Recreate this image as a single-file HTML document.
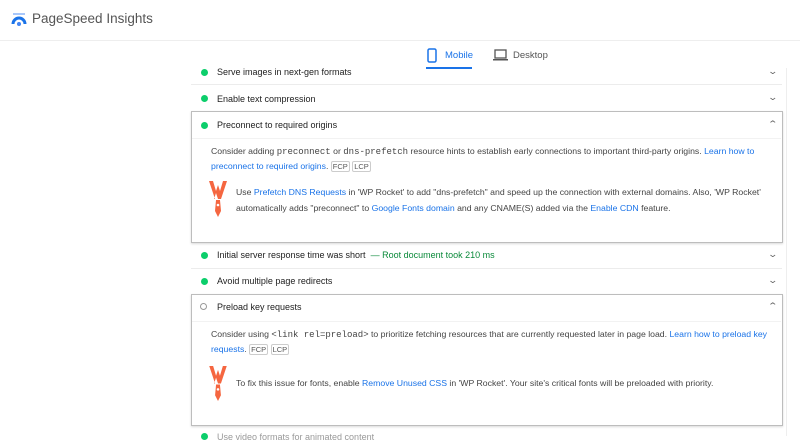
<!DOCTYPE html><html><head><style>
body{margin:0;width:800px;height:436px;overflow:hidden;background:#fff;font-family:"Liberation Sans",sans-serif;color:#212121;position:relative}
.a{position:absolute}
.hdr{left:0;top:0;width:800px;height:40px;border-bottom:1px solid #eee}
.t{font-size:9px;white-space:nowrap}
.dot{width:7px;height:7px;border-radius:50%;background:#0cce6b}
.chev{font-size:9px;color:#666;transform:scaleX(1.4)}
.ln{height:1px;background:#ececec}
.box{border:1px solid #bdbdbd;box-shadow:0 1px 2px rgba(0,0,0,.15)}
a{color:#1a73e8;text-decoration:none}
.m{font-family:"Liberation Mono",monospace;font-size:9px}
.tag{border:1px solid #ccc;border-radius:2px;font-size:7.5px;padding:0 1px;color:#555}
.p{font-size:8.7px;color:#444;white-space:nowrap}
</style></head><body>
<div class="a hdr"></div>
<svg class="a" style="left:11px;top:12px" width="16" height="14" viewBox="0 0 16 14"><path d="M2 12a6 6 0 0 1 12 0" stroke="#1a73e8" stroke-width="3" fill="none"/><circle cx="8" cy="12" r="2" fill="#4285f4"/><rect x="2" y="1" width="12" height="2" fill="#a8c7fa"/></svg>
<div class="a" style="left:32px;top:11px;font-size:13.5px;color:#555">PageSpeed Insights</div>
<svg class="a" style="left:427px;top:48px" width="10" height="15"><rect x="1" y="1" width="8" height="13" rx="1.5" fill="none" stroke="#1a73e8" stroke-width="1.5"/></svg>
<div class="a" style="left:445px;top:50px;font-size:9.5px;color:#1a73e8">Mobile</div>
<div class="a" style="left:426px;top:67px;width:46px;height:2px;background:#1a73e8"></div>
<svg class="a" style="left:493px;top:49px" width="15" height="12"><rect x="2" y="1" width="11" height="8" fill="none" stroke="#555" stroke-width="1.3"/><rect x="0" y="10" width="15" height="1.5" fill="#555"/></svg>
<div class="a" style="left:513px;top:50px;font-size:9.5px;color:#555">Desktop</div>
<div class="a" style="left:786px;top:68px;width:1px;height:368px;background:#eee"></div>

<div class="a dot" style="left:201px;top:69px"></div><div class="a t" style="left:217px;top:67px">Serve images in next-gen formats</div><div class="a chev" style="left:769px;top:66px">⌄</div>
<div class="a ln" style="left:191px;top:84px;width:591px"></div>
<div class="a dot" style="left:201px;top:95px"></div><div class="a t" style="left:217px;top:94px">Enable text compression</div><div class="a chev" style="left:769px;top:92px">⌄</div>

<div class="a box" style="left:191px;top:111px;width:590px;height:130px"></div>
<div class="a dot" style="left:201px;top:122px"></div><div class="a t" style="left:217px;top:120px">Preconnect to required origins</div><div class="a chev" style="left:769px;top:119px">⌃</div>
<div class="a ln" style="left:192px;top:138px;width:589px;background:#f2f2f2"></div>
<div class="a p" style="left:211px;top:146px">Consider adding <span class="m">preconnect</span> or <span class="m">dns-prefetch</span> resource hints to establish early connections to important third-party origins. <a>Learn how to</a></div>
<div class="a p" style="left:211px;top:161px"><a>preconnect to required origins</a>. <span class="tag">FCP</span> <span class="tag">LCP</span></div>
<svg class="a" style="left:209px;top:181px" width="18" height="37" viewBox="0 0 18 37"><path d="M0 0h4l3 10 2-6 2 6 3-10h4l-6 18h-3l-2-6-2 6H6z" fill="#f56640"/><path d="M7 19h4l1 11-3 6-3-6z" fill="#f56640"/><circle cx="9" cy="24" r="1.3" fill="#fff"/></svg>
<div class="a p" style="left:236px;top:187px">Use <a>Prefetch DNS Requests</a> in 'WP Rocket' to add "dns-prefetch" and speed up the connection with external domains. Also, 'WP Rocket'</div>
<div class="a p" style="left:236px;top:203px">automatically adds "preconnect" to <a>Google Fonts domain</a> and any CNAME(S) added via the <a>Enable CDN</a> feature.</div>

<div class="a dot" style="left:201px;top:252px"></div><div class="a t" style="left:217px;top:250px">Initial server response time was short <span style="color:#0a8a3a">&nbsp;— Root document took 210 ms</span></div><div class="a chev" style="left:769px;top:249px">⌄</div>
<div class="a ln" style="left:191px;top:268px;width:591px"></div>
<div class="a dot" style="left:201px;top:278px"></div><div class="a t" style="left:217px;top:276px">Avoid multiple page redirects</div><div class="a chev" style="left:769px;top:275px">⌄</div>

<div class="a box" style="left:191px;top:294px;width:590px;height:130px"></div>
<div class="a" style="left:200px;top:303px;width:5px;height:5px;border-radius:50%;border:1px solid #999"></div><div class="a t" style="left:217px;top:302px">Preload key requests</div><div class="a chev" style="left:769px;top:301px">⌃</div>
<div class="a ln" style="left:192px;top:321px;width:589px;background:#f2f2f2"></div>
<div class="a p" style="left:211px;top:329px">Consider using <span class="m">&lt;link rel=preload&gt;</span> to prioritize fetching resources that are currently requested later in page load. <a>Learn how to preload key</a></div>
<div class="a p" style="left:211px;top:344px"><a>requests</a>. <span class="tag">FCP</span> <span class="tag">LCP</span></div>
<svg class="a" style="left:209px;top:366px" width="18" height="36" viewBox="0 0 18 37"><path d="M0 0h4l3 10 2-6 2 6 3-10h4l-6 18h-3l-2-6-2 6H6z" fill="#f56640"/><path d="M7 19h4l1 11-3 6-3-6z" fill="#f56640"/><circle cx="9" cy="24" r="1.3" fill="#fff"/></svg>
<div class="a p" style="left:236px;top:378px">To fix this issue for fonts, enable <a>Remove Unused CSS</a> in 'WP Rocket'. Your site's critical fonts will be preloaded with priority.</div>
<div class="a dot" style="left:201px;top:433px"></div><div class="a t" style="left:217px;top:432px;color:#999">Use video formats for animated content</div>
</body></html>
